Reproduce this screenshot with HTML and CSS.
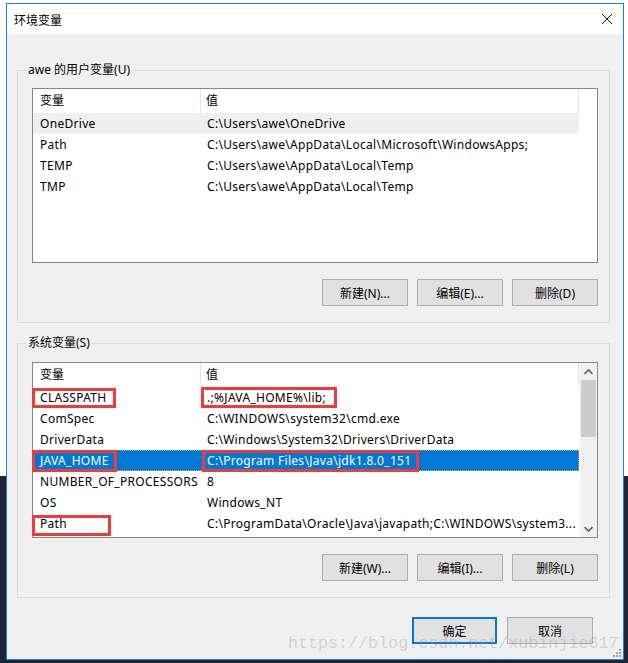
FILE: index.html
```html
<!DOCTYPE html>
<html lang="zh-CN">
<head>
    <meta charset="UTF-8">
    <title>环境变量</title>
    <link rel="stylesheet" href="styles.css">
</head>
<body>
    <div class="dialog">
        <div class="titlebar">
            <span class="title">环境变量</span>
            <svg class="close" width="12" height="12" viewBox="0 0 12 12">
                <path d="M1 1 L11 11 M11 1 L1 11" stroke="#111" stroke-width="1" fill="none"/>
            </svg>
        </div>

        <div class="content">
            <fieldset class="group">
                <legend>awe 的用户变量(U)</legend>
                <div class="list user-list">
                    <div class="rows">
                        <div class="row head"><span>变量</span><span>值</span></div>
                        <div class="row hover"><span>OneDrive</span><span>C:\Users\awe\OneDrive</span></div>
                        <div class="row"><span>Path</span><span>C:\Users\awe\AppData\Local\Microsoft\WindowsApps;</span></div>
                        <div class="row"><span>TEMP</span><span>C:\Users\awe\AppData\Local\Temp</span></div>
                        <div class="row"><span>TMP</span><span>C:\Users\awe\AppData\Local\Temp</span></div>
                    </div>
                </div>
                <div class="buttons">
                    <button class="btn">新建(N)...</button>
                    <button class="btn">编辑(E)...</button>
                    <button class="btn">删除(D)</button>
                </div>
            </fieldset>

            <fieldset class="group sys">
                <legend>系统变量(S)</legend>
                <div class="list sys-list">
                    <div class="rows">
                        <div class="row head"><span>变量</span><span>值</span></div>
                        <div class="row"><span>CLASSPATH</span><span>.;%JAVA_HOME%\lib;</span></div>
                        <div class="row"><span>ComSpec</span><span>C:\WINDOWS\system32\cmd.exe</span></div>
                        <div class="row"><span>DriverData</span><span>C:\Windows\System32\Drivers\DriverData</span></div>
                        <div class="row selected"><span>JAVA_HOME</span><span>C:\Program Files\Java\jdk1.8.0_151</span></div>
                        <div class="row"><span>NUMBER_OF_PROCESSORS</span><span>8</span></div>
                        <div class="row"><span>OS</span><span>Windows_NT</span></div>
                        <div class="row"><span>Path</span><span>C:\ProgramData\Oracle\Java\javapath;C:\WINDOWS\system3...</span></div>
                    </div>
                    <div class="scrollbar">
                        <svg class="arrow" width="9" height="6" viewBox="0 0 9 6"><path d="M0.5 5 L4.5 1 L8.5 5" stroke="#606060" stroke-width="1.6" fill="none"/></svg>
                        <div class="thumb"></div>
                        <div class="track"></div>
                        <svg class="arrow" width="9" height="6" viewBox="0 0 9 6"><path d="M0.5 1 L4.5 5 L8.5 1" stroke="#606060" stroke-width="1.6" fill="none"/></svg>
                    </div>

                    <div class="mark mark-a"></div>
                    <div class="mark mark-b"></div>
                    <div class="mark mark-c"></div>
                    <div class="mark mark-d"></div>
                    <div class="mark mark-e"></div>
                </div>
                <div class="buttons">
                    <button class="btn">新建(W)...</button>
                    <button class="btn">编辑(I)...</button>
                    <button class="btn">删除(L)</button>
                </div>
            </fieldset>

            <div class="footer">
                <button class="btn default">确定</button>
                <button class="btn">取消</button>
            </div>

            <div class="watermark">https://blog.csdn.net/xubinjie617</div>
            <svg class="grip" width="9" height="9" viewBox="0 0 9 9">
                <rect x="7" y="1" width="2" height="2" fill="#a0a0a0"/>
                <rect x="4" y="4" width="2" height="2" fill="#a0a0a0"/>
                <rect x="7" y="4" width="2" height="2" fill="#a0a0a0"/>
                <rect x="1" y="7" width="2" height="2" fill="#a0a0a0"/>
                <rect x="4" y="7" width="2" height="2" fill="#a0a0a0"/>
                <rect x="7" y="7" width="2" height="2" fill="#a0a0a0"/>
            </svg>
        </div>
    </div>
</body>
</html>
```

FILE: styles.css
```css
html,
body {
    margin: 0;
    width: 628px;
    height: 663px;
    overflow: hidden;
}

body {
    background: linear-gradient(#ffffff 0 476px, #1d2636 476px);
    font-family: "Noto Sans", "Noto Sans CJK SC", sans-serif;
    font-size: 12px;
    color: #000;
}

.dialog {
    position: relative;
    margin: 3px 4px 0 6px;
    width: 618px;
    height: 657px;
    box-sizing: border-box;
    border: 1px solid #1883d7;
    background-color: #f0f0f0;
    display: flex;
    flex-direction: column;
}

.titlebar {
    height: 30px;
    background-color: #fff;
    display: flex;
    align-items: center;
    justify-content: space-between;
    padding: 0 10px 0 7px;
}

.title {
    font-family: "Noto Sans CJK SC", sans-serif;
    font-size: 12px;
}

.content {
    padding: 28px 13px 0 10px;
}

.group {
    margin: 0;
    padding: 0 0 16px 10px;
    border: 1px solid #dcdcdc;
    min-width: 0;
}

.group legend {
    padding: 0 2px;
    margin-left: -2px;
    line-height: 16px;
    font-family: "Noto Sans", "Noto Sans CJK SC", sans-serif;
}

.sys {
    margin-top: 12px;
}

.list {
    position: relative;
    margin: 10px 11px 0 4px;
    height: 175px;
    box-sizing: border-box;
    border: 1px solid #828790;
    background-color: #fff;
    display: flex;
}

.sys-list {
    margin-top: 11px;
    height: 176px;
}

.rows {
    width: 546px;
}

.row {
    display: grid;
    grid-template-columns: 168px 378px;
    height: 21px;
    line-height: 21px;
    white-space: nowrap;
    letter-spacing: 0.3px;
}

.row span {
    padding-left: 7px;
    overflow: hidden;
}

.row span + span {
    padding-left: 6px;
}

.row.head {
    height: 24px;
    line-height: 23px;
    letter-spacing: 0;
}

.row.head span {
    border-right: 1px solid #e5e5e5;
}

.row.head span + span {
    padding-left: 5px;
}

.row.hover {
    background-color: #efefef;
}

.row.selected {
    background-color: #0078d7;
    color: #fff;
    outline: 1px dotted #d6a35a;
    outline-offset: -1px;
}

.scrollbar {
    margin-left: auto;
    width: 17px;
    background-color: #f0f0f0;
    display: flex;
    flex-direction: column;
    align-items: center;
}

.arrow {
    margin: 6px 0 5px;
}

.thumb {
    width: 15px;
    height: 57px;
    background-color: #cdcdcd;
}

.track {
    flex: 1;
}

.mark {
    position: absolute;
    box-sizing: border-box;
    border: 3px solid #ee3b3b;
}

.mark-a { left: -1px; top: 25px; width: 84px; height: 20px; }
.mark-b { left: 168px; top: 24px; width: 136px; height: 21px; }
.mark-c { left: -1px; top: 87px; width: 85px; height: 22px; }
.mark-d { left: 169px; top: 87px; width: 217px; height: 22px; }
.mark-e { left: -1px; top: 152px; width: 79px; height: 21px; }

.buttons {
    display: flex;
    justify-content: flex-end;
    gap: 9px;
    margin-top: 16px;
    padding-right: 11px;
}

.btn {
    width: 86px;
    height: 27px;
    box-sizing: border-box;
    border: 1px solid #adadad;
    background-color: #e1e1e1;
    font-family: "Noto Sans", "Noto Sans CJK SC", sans-serif;
    font-size: 12px;
    color: #000;
    padding: 0;
}

.footer {
    display: flex;
    justify-content: flex-end;
    gap: 10px;
    margin-top: 19px;
    padding-right: 17px;
}

.btn.default {
    width: 85px;
    border: 2px solid #0078d7;
}

.watermark {
    position: absolute;
    left: 281px;
    top: 630px;
    font-family: "Liberation Mono", monospace;
    font-size: 16.7px;
    line-height: 20px;
    color: rgba(150, 150, 150, 0.35);
    white-space: nowrap;
}

.grip {
    position: absolute;
    right: 2px;
    bottom: 2px;
}
```
